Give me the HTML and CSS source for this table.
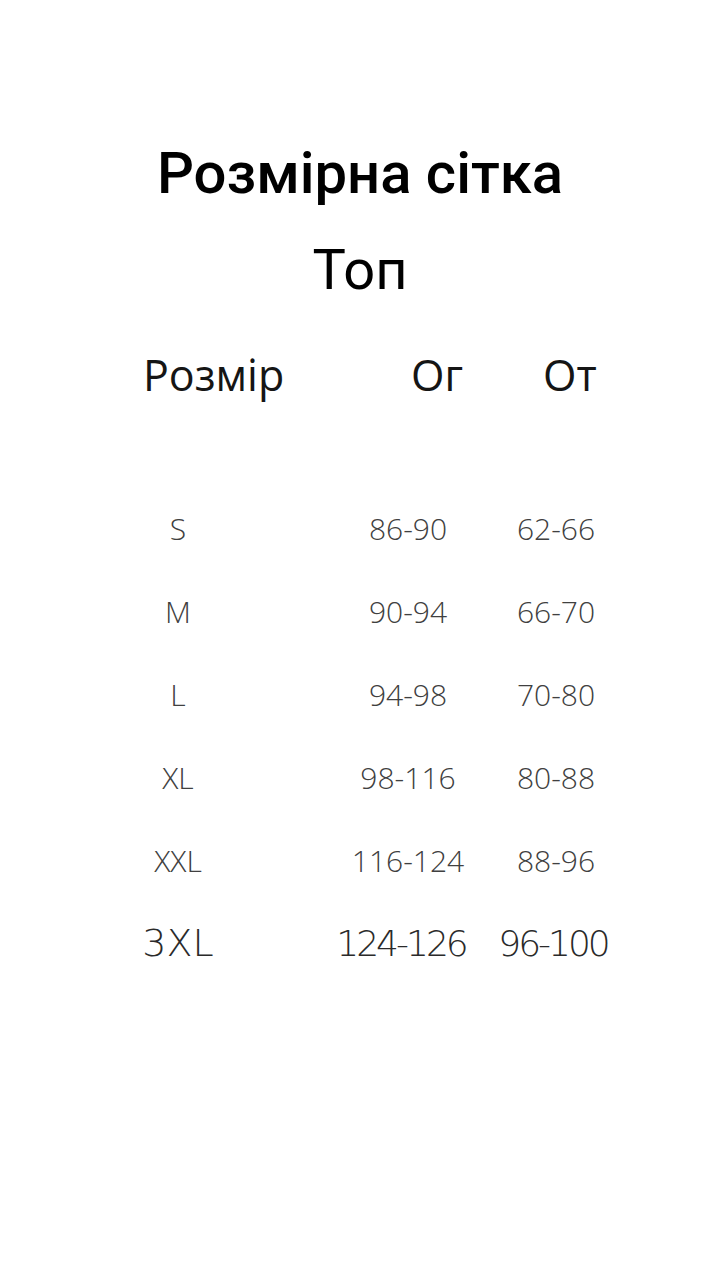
FILE: index.html
```html
<!DOCTYPE html>
<html lang="uk">
<head>
<meta charset="utf-8">
<title>Розмірна сітка</title>
<link rel="stylesheet" href="styles.css">
</head>
<body>
<main class="page">
  <h1 class="title">Розмірна сітка</h1>
  <h2 class="subtitle">Топ</h2>
  <div class="head">
    <span class="h-size">Розмір</span>
    <span class="h-og">Ог</span>
    <span class="h-ot">От</span>
  </div>
  <div class="table">
    <div class="row"><span class="c-size">S</span><span class="c-og">86-90</span><span class="c-ot">62-66</span></div>
    <div class="row"><span class="c-size">M</span><span class="c-og">90-94</span><span class="c-ot">66-70</span></div>
    <div class="row"><span class="c-size">L</span><span class="c-og">94-98</span><span class="c-ot">70-80</span></div>
    <div class="row"><span class="c-size">XL</span><span class="c-og">98-116</span><span class="c-ot">80-88</span></div>
    <div class="row"><span class="c-size">XXL</span><span class="c-og">116-124</span><span class="c-ot">88-96</span></div>
    <div class="row row-last"><span class="c-size">3XL</span><span class="c-og">124-126</span><span class="c-ot">96-100</span></div>
  </div>
</main>
</body>
</html>
```
FILE: styles.css
```css
html, body {
  margin: 0;
  padding: 0;
  background: #ffffff;
}
.page {
  width: 720px;
  height: 1280px;
  display: flex;
  flex-direction: column;
  box-sizing: border-box;
  padding-top: 139px;
}
.title {
  margin: 0;
  font-family: Roboto, "Liberation Sans", sans-serif;
  font-weight: 500;
  font-size: 58px;
  line-height: 68px;
  color: #000;
  text-align: center;
}
.subtitle {
  margin: 30px 0 0;
  font-family: Roboto, "Liberation Sans", sans-serif;
  font-weight: 400;
  font-size: 56px;
  line-height: 66px;
  color: #000;
  text-align: center;
}
.head {
  margin-top: 43px;
  padding-left: 143px;
  display: grid;
  grid-template-columns: 268px 132px auto;
  font-family: "Open Sans", "Noto Sans", sans-serif;
  font-size: 43px;
  line-height: 58px;
  color: #151515;
}
.table {
  margin-top: 83px;
  padding-left: 100px;
  display: flex;
  flex-direction: column;
}
.row {
  display: grid;
  grid-template-columns: 156px 78px 148px 148px;
  height: 83px;
  font-family: "Open Sans", "Noto Sans", sans-serif;
  font-weight: 300;
  font-size: 30px;
  line-height: 83px;
  color: #404040;
  text-align: center;
}
.c-size { grid-column: 1; }
.c-og { grid-column: 3; }
.c-og, .c-ot { white-space: nowrap; }
.c-ot { grid-column: 4; }
.row-last {
  font-family: "DejaVu Sans", sans-serif;
  font-weight: 200;
  font-size: 36px;
  color: #2a2a2a;
}
.row-last .c-size {
  font-size: 38px;
}
.row-last .c-og,
.row-last .c-ot {
  letter-spacing: -3px;
}
.row-last .c-og {
  padding-right: 14px;
}
.row-last .c-ot {
  padding-right: 6px;
}
```
